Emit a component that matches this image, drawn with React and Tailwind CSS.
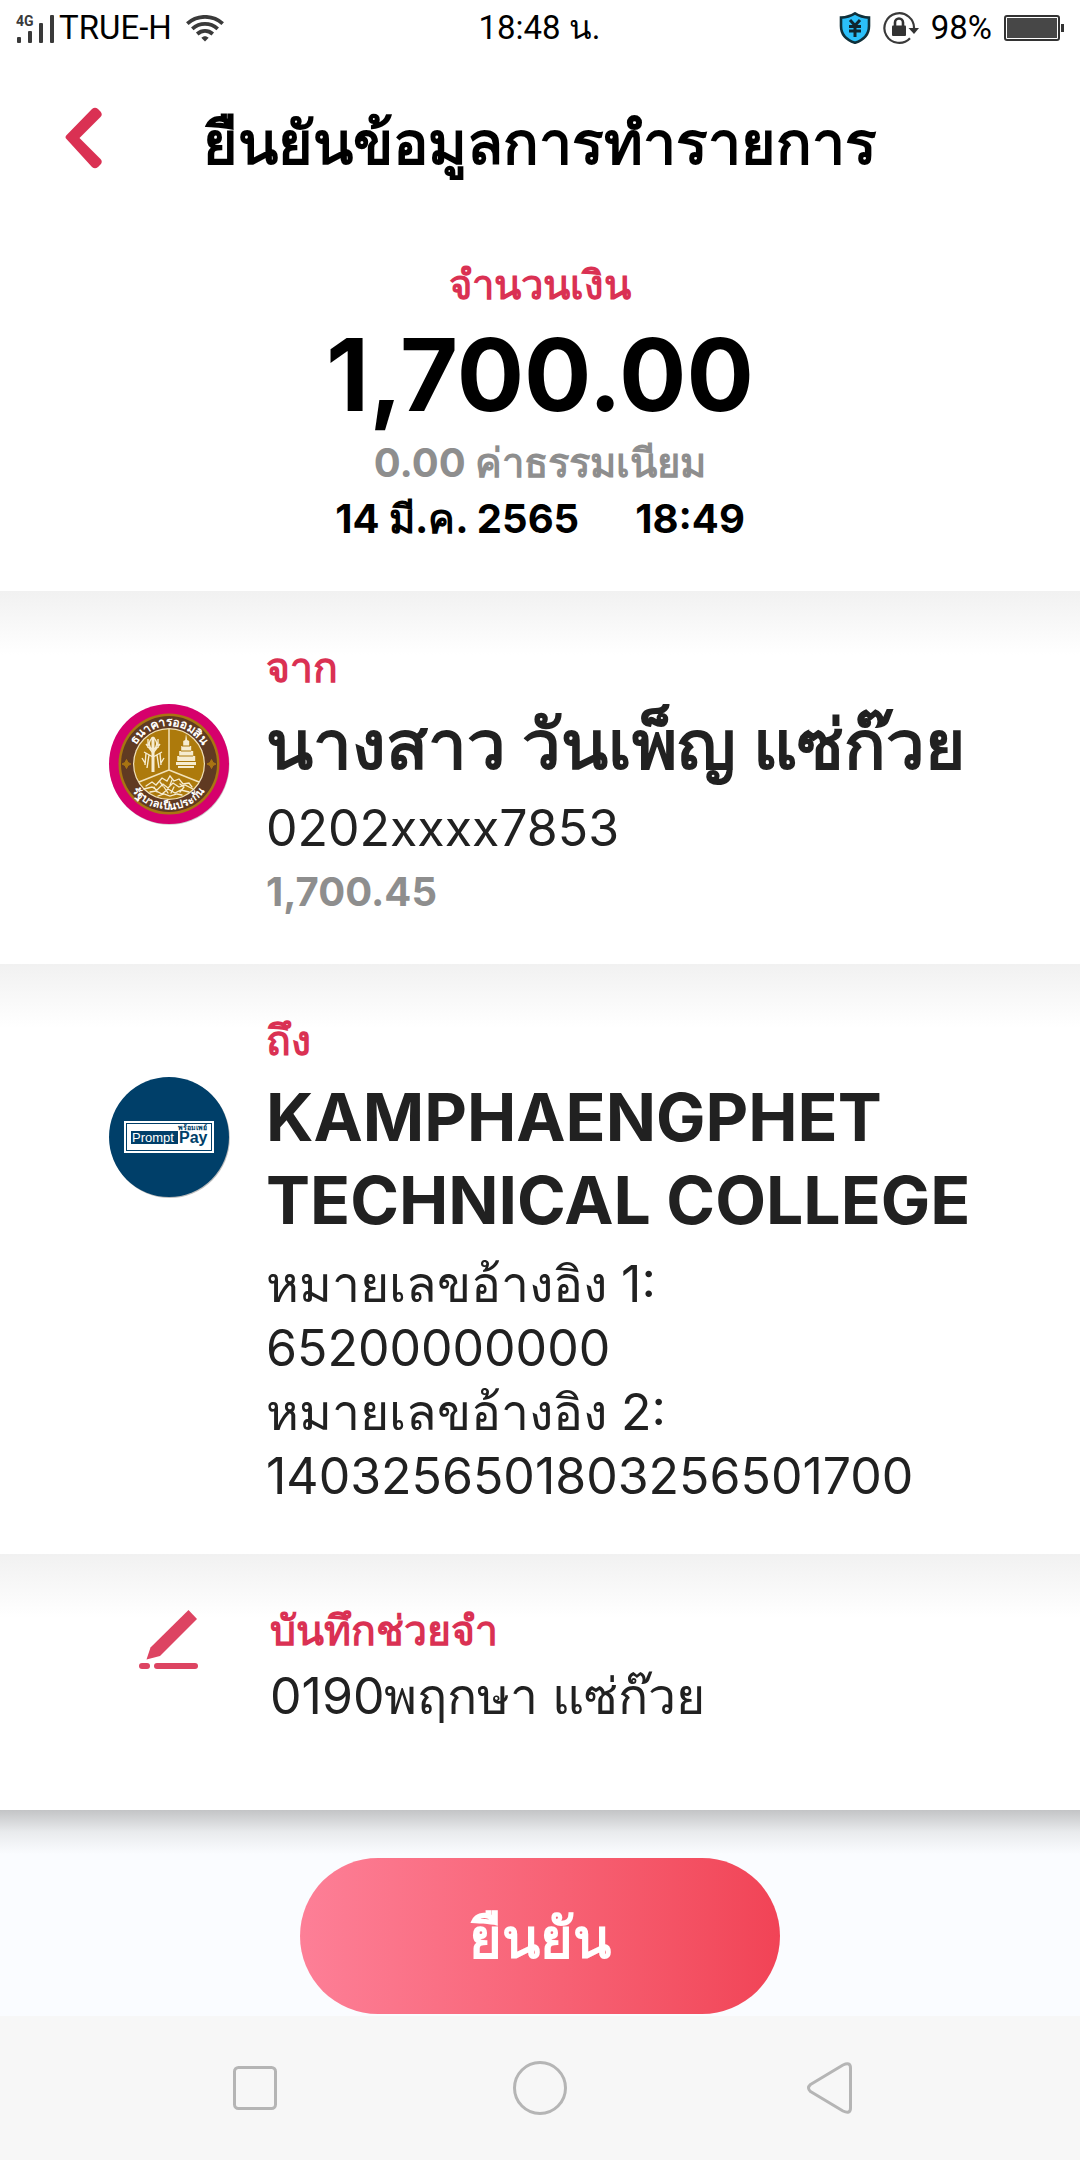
import React from 'react';

function SignalIcon() {
  return (
    <svg className="h-8 w-[42px]" viewBox="-1 -3 42 32" fill="#3a3a3a" aria-hidden="true">
      <text x="0" y="11" fontSize="14" fontWeight="700" fontFamily="Roboto, sans-serif">4G</text>
      <rect x="1" y="22" width="4" height="6" rx="1" />
      <rect x="12" y="16" width="4" height="12" rx="1" />
      <rect x="23" y="8" width="4" height="20" rx="1" />
      <rect x="34" y="0" width="4" height="28" rx="1" />
    </svg>
  );
}

function WifiIcon() {
  return (
    <svg className="h-[27px] w-[38px]" viewBox="0 0 38 27" fill="none" stroke="#3a3a3a" strokeWidth="3.8" aria-hidden="true">
      <path d="M1.3 8.6C11.5 -.4 26.5 -.4 36.7 8.6" />
      <path d="M6.3 13.9C13.8 7.3 24.2 7.3 31.7 13.9" />
      <path d="M11.2 19C15.9 15 22.1 15 26.8 19" />
      <path d="M15.3 22.8C17.4 20.6 20.6 20.6 22.7 22.8L19 26.6Z" fill="#3a3a3a" stroke="none" />
    </svg>
  );
}

function ShieldIcon() {
  return (
    <svg className="h-8 w-8" viewBox="0 0 32 32" fill="none" aria-hidden="true">
      <path d="M16 1.4C20.5 4.2 25 5.4 30 5.6V14C30 22.5 24.5 28 16 30.8C7.5 28 2 22.5 2 14V5.6C7 5.4 11.5 4.2 16 1.4Z" fill="#2bc0fa" stroke="#10303a" strokeWidth="2.6" />
      <path d="M11 8L16 13.5L21 8M16 13.5V25M10 14.500H22M10 19H22" stroke="#10262e" strokeWidth="3" />
    </svg>
  );
}

function RotationLockIcon() {
  return (
    <svg className="h-8 w-9" viewBox="0 0 36 32" fill="none" aria-hidden="true">
      <path d="M27 26.200A14.800 14.800 0 1 1 31 17" stroke="#3a3a3a" strokeWidth="2.200" />
      <path d="M25.500 16H36L31 22Z" fill="#333" />
      <rect x="9" y="13.500" width="14" height="10.500" rx="1" fill="#333" />
      <path d="M12 14V10.500a4 4 0 0 1 8 0V14" stroke="#333" strokeWidth="2.600" />
    </svg>
  );
}

function BatteryIcon() {
  return (
    <svg className="h-[26px] w-[60px]" viewBox="0 0 60 26" fill="none" aria-hidden="true">
      <rect x="1" y="1" width="54" height="24" rx="2" stroke="#333" strokeWidth="2" />
      <rect x="3" y="3" width="50" height="20" fill="#474747" />
      <rect x="57" y="9" width="3" height="8" fill="#333" />
    </svg>
  );
}

function StatusBar() {
  return (
    <div className="grid h-14 grid-cols-[1fr_auto_1fr] items-center pr-4 pl-[15px] font-[Roboto,'Noto_Sans',sans-serif] text-[33px] leading-10 text-black">
      <div className="flex items-center gap-0.5">
        <SignalIcon />
        <span>TRUE-H</span>
        <span className="pl-3"><WifiIcon /></span>
      </div>
      <span>18:48 น.</span>
      <div className="flex items-center justify-end gap-3">
        <ShieldIcon />
        <RotationLockIcon />
        <span>98%</span>
        <BatteryIcon />
      </div>
    </div>
  );
}

function BankLogo() {
  return (
    <svg className="size-[122px]" viewBox="0 0 122 122" role="img" aria-label="ธนาคารออมสิน">
      <defs>
        <path id="ring-top" d="M23 61A38 38 0 0 1 99 61" />
        <path id="ring-bottom" d="M16 56A45.300 45.300 0 1 0 106 56" />
      </defs>
      <circle cx="61.500" cy="61.800" r="60" fill="#c9c9c9" />
      <circle cx="61" cy="61" r="60" fill="#d6006c" />
      <circle cx="61" cy="61" r="50.500" fill="#a97412" />
      <circle cx="61" cy="61" r="48" fill="#603a22" />
      <circle cx="61" cy="61" r="36" fill="#f3e3ba" />
      <circle cx="61" cy="61" r="34.800" fill="#ad7a0c" />
      <g fill="#fff" fontFamily="'Noto Sans', sans-serif" fontWeight="700">
        <text textAnchor="middle" fontSize="12"><textPath href="#ring-top" startOffset="50%">ธนาคารออมสิน</textPath></text>
        <text textAnchor="middle" fontSize="11"><textPath href="#ring-bottom" startOffset="50%">รัฐบาลเป็นประกัน</textPath></text>
      </g>
      <path d="M18.500 56.500l1.500 3 3 1.500-3 1.500-1.500 3-1.500-3-3-1.500 3-1.500zM103.500 56.500l1.500 3 3 1.500-3 1.500-1.500 3-1.500-3-3-1.500 3-1.500z" fill="#a97412" stroke="#a97412" />
      <path d="M61 26V67L31 79M61 67L91 79" stroke="#f3e3ba" strokeWidth="1.500" fill="none" />
      <g stroke="#f6ecd0" fill="none">
        <path d="M45 34V69" strokeWidth="3" />
        <path d="M45 34c-5 5-5 9 0 13c5-4 5-8 0-13M40 36v9M50 36v9M38 41l7 9 7-9M36 49l9 5 9-5M38 50l-1 12M41 52l-2 13M52 50l1 12M49 52l2 13M34 55l3 5M56 55l-3 5" strokeWidth="1.400" />
      </g>
      <g fill="#f6ecd0">
        <path d="M78 31l1.200 6 2 1v5h2v5h2v5h2v5h-18v-5h2v-5h2v-5h2v-5l2-1z" />
        <path d="M68 59h20v3H68zM70 63h16v2H70z" />
      </g>
      <path d="M74 43h8M73 48h10M71 53h14" stroke="#ad7a0c" strokeWidth="1" />
      <g stroke="#f6ecd0" strokeWidth="1.300" fill="none" strokeLinecap="round">
        <path d="M38 83l6-4 4 3 6-7 5 3 3-5 4 5 5-2 4 5 6-1 3 4" />
        <path d="M36 86l8-2 5 3 6-6 5 4 5-5 6 4 6-2 8 4M42 89l6-1 6 3 6-5 7 4 6-3 8 2M50 93l6-2 6 2 7-2 5 1M52 79l3 4M64 77l-2 5M72 81l4 3M46 84l3 5M56 84l4 6M66 84l-3 6M76 84l-4 5" />
      </g>
    </svg>
  );
}

function PromptPayLogo() {
  return (
    <svg className="size-[122px]" viewBox="0 0 122 122" role="img" aria-label="PromptPay">
      <circle cx="61.800" cy="62" r="60" fill="#bcbcbc" />
      <circle cx="61" cy="61" r="60" fill="#003f69" />
      <rect x="16" y="45" width="90" height="32" fill="#fff" />
      <rect x="18.500" y="47.500" width="85" height="27" fill="none" stroke="#003f69" strokeWidth="1" />
      <rect x="23" y="55" width="47" height="13" fill="#003f69" />
      <text x="24" y="65.500" fontFamily="'Liberation Sans', sans-serif" fontSize="13" fill="#fff">Prompt</text>
      <text x="71" y="67" fontFamily="'Liberation Sans', sans-serif" fontSize="16" fontWeight="700" fill="#003f69">Pay</text>
      <text x="70" y="54" fontFamily="'Noto Sans', sans-serif" fontSize="7" fontWeight="700" fill="#003f69">พร้อมเพย์</text>
    </svg>
  );
}

function MemoIcon() {
  return (
    <svg className="h-[60px] w-[60px]" viewBox="0 0 60 60" fill="#dd4462" aria-hidden="true">
      <path d="M49.500 0L58 9L21 46L7.500 49.500L11.500 37.500Z" />
      <rect x="0" y="53" width="11" height="6" rx="3" />
      <rect x="15" y="53" width="44" height="6" rx="3" />
    </svg>
  );
}

function Section({ icon, label, children, className }) {
  return (
    <section className={'flex bg-white bg-linear-to-b from-[#f1f1f1] to-white bg-size-[100%_64px] bg-no-repeat pt-12 pr-20 pl-[108px] ' + className}>
      <div className="flex w-[122px] shrink-0 justify-center">{icon}</div>
      <div className="min-w-0 flex-1 text-[50px] leading-[64px] text-[#212121]">
        <h2 className="text-[41px] leading-[56px] font-bold text-[#da3153]">{label}</h2>
        {children}
      </div>
    </section>
  );
}

export default function App() {
  return (
    <div className="flex min-h-screen flex-col bg-white font-[Inter,'Noto_Sans',sans-serif]">
      <StatusBar />
      <header className="grid grid-cols-[108px_1fr_108px] items-start pt-[47px]">
        <button type="button" aria-label="ย้อนกลับ" className="justify-self-end pt-1 pr-1">
          <svg className="h-[62px] w-10" viewBox="0 0 40 62" fill="#da3153" aria-hidden="true">
            <path d="M2 31.500Q1 30 2.200 28.500L28 2Q31 -.5 34 2L36.500 4.500Q39 7.500 36.500 10L15.500 31L36.500 52Q39 54.500 36.500 57.500L34 60Q31 62.500 28 60Z" />
          </svg>
        </button>
        <h1 className="text-center text-[59px] leading-[80px] font-bold text-black">ยืนยันข้อมูลการทำรายการ</h1>
      </header>

      <section className="pt-[74px] pb-11 text-center text-[40px] leading-[56px] font-bold text-black">
        <h2 className="text-[#da3153]">จำนวนเงิน</h2>
        <p className="mt-0.5 text-[100px] leading-[120px]">1,700.00</p>
        <p className="text-[#8e8e8e]">0.00 ค่าธรรมเนียม</p>
        <p className="flex justify-center gap-14">
          <span>14 มี.ค. 2565</span>
          <span>18:49</span>
        </p>
      </section>

      <Section icon={<div className="pt-16"><BankLogo /></div>} label="จาก" className="gap-9 pb-11">
        <p className="mt-2 text-[69px] leading-[83px] font-bold">นางสาว วันเพ็ญ แซ่ก๊วย</p>
        <p className="mt-[10px]">0202xxxx7853</p>
        <p className="mt-1 text-[40px] leading-[56px] font-bold text-[#8e8e8e]">1,700.45</p>
      </Section>

      <Section icon={<div className="pt-16"><PromptPayLogo /></div>} label="ถึง" className="gap-9 pb-[46px]">
        <p className="mt-2 text-[66px] leading-[83px] font-bold">KAMPHAENGPHET TECHNICAL COLLEGE</p>
        <dl className="mt-[10px]">
          <dt>หมายเลขอ้างอิง 1:</dt>
          <dd>65200000000</dd>
          <dt>หมายเลขอ้างอิง 2:</dt>
          <dd>1403256501803256501700</dd>
        </dl>
      </Section>

      <Section icon={<div className="pt-2"><MemoIcon /></div>} label="บันทึกช่วยจำ" className="gap-10 pb-[82px]">
        <p className="mt-1.5">0190พฤกษา แซ่ก๊วย</p>
      </Section>

      <footer className="flex flex-1 justify-center bg-[#fafcff] bg-linear-to-b from-[#c3c4c6] via-[#e9ebed] to-[#fafcff] bg-size-[100%_44px] bg-no-repeat pt-12 pb-0.5">
        <button type="button" className="h-[156px] w-[480px] rounded-full bg-linear-to-r from-[#fd7f97] to-[#f14356] pt-1 text-[56px] leading-[80px] font-bold text-white">
          ยืนยัน
        </button>
      </footer>

      <nav className="grid h-36 grid-cols-3 items-center bg-[#f7f7f7] px-28">
        <button type="button" aria-label="แอปล่าสุด" className="justify-self-center">
          <svg className="size-14" viewBox="0 0 56 56" fill="none" stroke="#b5b5b5" strokeWidth="3" aria-hidden="true">
            <rect x="7.500" y="7.500" width="41" height="41" rx="4" />
          </svg>
        </button>
        <button type="button" aria-label="หน้าหลัก" className="justify-self-center">
          <svg className="size-14" viewBox="0 0 56 56" fill="none" stroke="#b5b5b5" strokeWidth="3" aria-hidden="true">
            <circle cx="28" cy="28" r="25.500" />
          </svg>
        </button>
        <button type="button" aria-label="กลับ" className="justify-self-center">
          <svg className="size-14" viewBox="-5 0 56 56" fill="none" stroke="#b5b5b5" strokeWidth="3" strokeLinejoin="round" aria-hidden="true">
            <path d="M8.500 24.500Q4.500 28 8.500 31.500L41 51Q48.500 54.500 48.500 48V8Q48.500 1.500 41 5Z" />
          </svg>
        </button>
      </nav>
    </div>
  );
}
